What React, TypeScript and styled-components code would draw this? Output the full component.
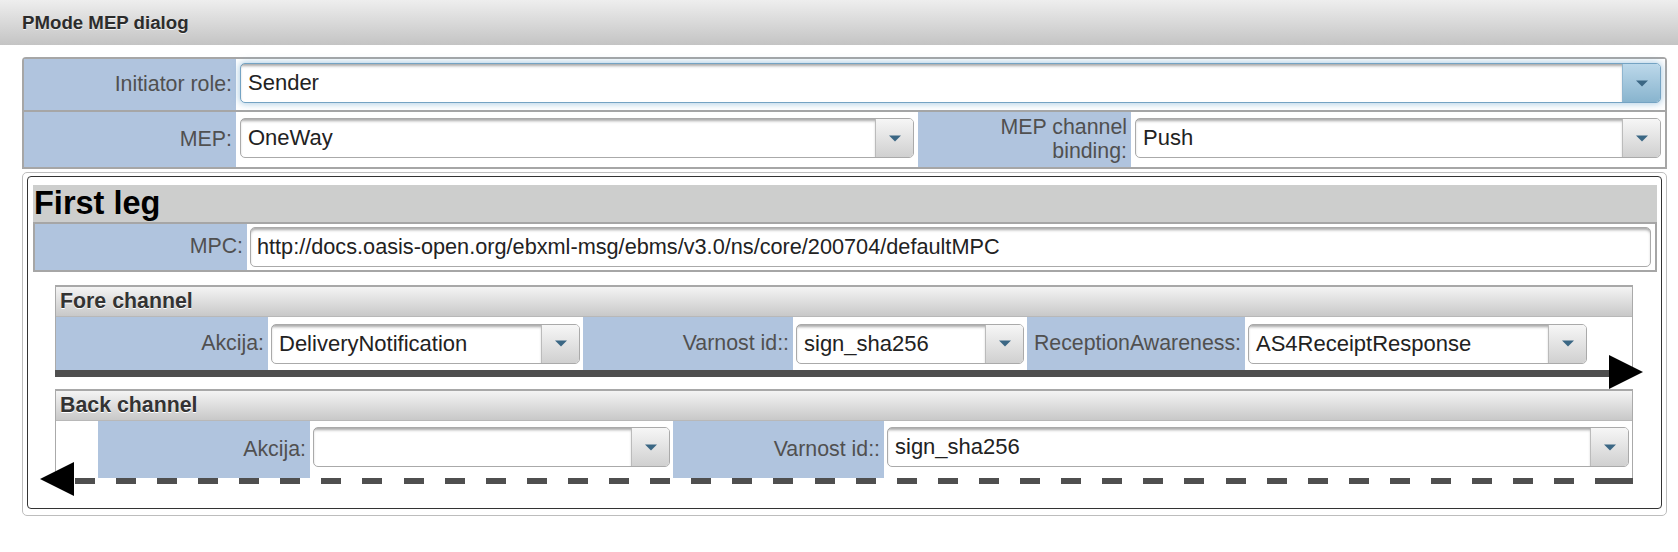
import React from 'react';
import styled, { createGlobalStyle } from 'styled-components';

const GlobalStyle = createGlobalStyle`
  html, body { margin: 0; padding: 0; background: #ffffff; }
  body {
    font-family: "Liberation Sans", Arial, Helvetica, sans-serif;
    font-size: 21.33px;
    color: #222222;
  }
  *, *::before, *::after { box-sizing: border-box; }
`;

const TitleBar = styled.header`
  height: 45px;
  display: flex;
  align-items: center;
  padding-left: 22px;
  background: linear-gradient(#eeeeee, #c4c4c4);
`;

const Title = styled.h1`
  margin: 0;
  font-size: 18.67px;
  font-weight: bold;
  color: #2c2c2c;
  text-shadow: 0 1px 0 rgba(255, 255, 255, 0.7);
`;

const Content = styled.main`
  padding: 12px 11px 0 22px;
`;

const FormGrid = styled.div`
  display: grid;
  grid-template-columns: 212px 682px 213px 1fr;
  row-gap: 2px;
  background: #a6a6a6;
  border: 2px solid #a6a6a6;
  border-radius: 4px 4px 0 0;
`;

const Label = styled.div<{ $w?: number }>`
  ${(p) => (p.$w ? `flex: 0 0 ${p.$w}px; width: ${p.$w}px;` : '')}
  background: #b0c4de;
  color: #505050;
  display: flex;
  align-items: center;
  justify-content: flex-end;
  text-align: right;
  padding: 4px 4px 4px 0;
  line-height: 23.5px;
  white-space: nowrap;
`;

const Field = styled.div<{ $w?: number; $top?: number }>`
  ${(p) => (p.$w ? `flex: 0 0 ${p.$w}px; width: ${p.$w}px;` : 'flex: 1;')}
  background: #ffffff;
  display: flex;
  align-items: ${(p) => (p.$top !== undefined ? 'flex-start' : 'center')};
  padding: ${(p) => p.$top ?? 0}px 3px 0 3px;
`;

const FormField = styled.div<{ $span?: number }>`
  grid-column: span ${(p) => p.$span ?? 1};
  background: #ffffff;
  display: flex;
  align-items: center;
  padding: 4px 4px 7px 4px;
`;

const Spacer = styled.div<{ $w: number }>`
  flex: 0 0 ${(p) => p.$w}px;
  background: #ffffff;
`;

const SelectBox = styled.div<{ $focus?: boolean }>`
  flex: 1;
  min-width: 0;
  height: 40px;
  display: flex;
  border: 1px solid ${(p) => (p.$focus ? '#74a3c3' : '#aaaaaa')};
  border-radius: 5px;
  background: #ffffff;
  overflow: hidden;
  box-shadow: ${(p) => (p.$focus ? '0 0 7px 1px rgba(110, 165, 205, 0.55)' : 'none')};
`;

const SelectValue = styled.div`
  flex: 1;
  min-width: 0;
  display: flex;
  align-items: center;
  padding: 0 7px;
  font-size: 22px;
  color: #222222;
  white-space: nowrap;
  overflow: hidden;
  box-shadow: inset 0 3px 3px -1px rgba(0, 0, 0, 0.35);
`;

const DropButton = styled.div<{ $focus?: boolean }>`
  flex: 0 0 38px;
  display: flex;
  align-items: center;
  justify-content: center;
  border-left: 1px solid ${(p) => (p.$focus ? '#8fb5cf' : '#bbbbbb')};
  background: ${(p) =>
    p.$focus ? 'linear-gradient(#bcd8ea, #88b4ce)' : 'linear-gradient(#f6f6f6, #d0d0d0)'};
`;

const TextInput = styled.div`
  flex: 1;
  height: 40px;
  display: flex;
  align-items: center;
  padding: 0 6px;
  border: 1px solid #aaaaaa;
  border-radius: 5px;
  background: #ffffff;
  font-size: 21.7px;
  color: #222222;
  white-space: nowrap;
  box-shadow: inset 0 3px 3px -1px rgba(0, 0, 0, 0.35);
`;

const LegOuter = styled.div`
  margin-top: 3px;
  border: 1px solid #bdbdbd;
  border-radius: 5px;
  padding: 3px 4px 6px 4px;
`;

const LegInner = styled.div`
  border: 1px solid #333333;
  border-radius: 4px;
  padding: 8px 4px 24px 5px;
`;

const LegHeader = styled.h2`
  margin: 0;
  height: 37px;
  background: #cdcecd;
  color: #000000;
  font-size: 32.5px;
  font-weight: bold;
  line-height: 37px;
  padding-left: 1px;
`;

const LegRow = styled.div`
  display: flex;
  height: 50px;
  border: 2px solid #a6a6a6;
`;

const ChannelBlock = styled.div<{ $mt: number }>`
  margin: ${(p) => p.$mt}px 24px 0 22px;
`;

const ChannelBox = styled.div`
  border: 1px solid #aaaaaa;
  border-top: 2px solid #a8a8a8;
  border-bottom: none;
`;

const ChannelHeader = styled.h3`
  margin: 0;
  height: 30px;
  line-height: 29px;
  padding-left: 4px;
  font-size: 21.33px;
  font-weight: bold;
  color: #333333;
  text-shadow: 0 1px 0 #ffffff;
  background: linear-gradient(#f4f4f4, #c8c8c8);
  border-bottom: 1px solid #b8b8b8;
`;

const ChannelRow = styled.div<{ $h: number }>`
  display: flex;
  height: ${(p) => p.$h}px;
  background: #ffffff;
`;

const FlowBar = styled.div`
  position: relative;
  height: 7px;
  background: #4f4f4f;
`;

const FlowDash = styled.div`
  position: relative;
  height: 6px;
  background:
    linear-gradient(to right, transparent calc(100% - 38px), #4f4f4f calc(100% - 38px)),
    repeating-linear-gradient(
      to right,
      transparent 0 19.8px,
      #4f4f4f 19.8px 39.8px,
      transparent 39.8px 41.1px
    );
`;

const ArrowHead = styled.svg<{ $side: 'left' | 'right'; $top: number; $offset: number }>`
  position: absolute;
  top: ${(p) => p.$top}px;
  ${(p) => p.$side}: ${(p) => p.$offset}px;
  width: 34px;
  height: 34px;
  display: block;
`;

function Caret() {
  return (
    <svg width="12" height="7" viewBox="0 0 12 7" aria-hidden="true">
      <path d="M0 0.5 H12 L6 6.5 Z" fill="#3b6784" />
    </svg>
  );
}

function Select({ value, focus }: { value: string; focus?: boolean }) {
  return (
    <SelectBox $focus={focus}>
      <SelectValue>{value}</SelectValue>
      <DropButton $focus={focus}>
        <Caret />
      </DropButton>
    </SelectBox>
  );
}

export default function App() {
  return (
    <>
      <GlobalStyle />
      <TitleBar>
        <Title>PMode MEP dialog</Title>
      </TitleBar>
      <Content>
        <FormGrid>
          <Label>Initiator role:</Label>
          <FormField $span={3}>
            <Select value="Sender" focus />
          </FormField>
          <Label>MEP:</Label>
          <FormField>
            <Select value="OneWay" />
          </FormField>
          <Label>
            MEP channel
            <br />
            binding:
          </Label>
          <FormField>
            <Select value="Push" />
          </FormField>
        </FormGrid>

        <LegOuter>
          <LegInner>
            <LegHeader>First leg</LegHeader>
            <LegRow>
              <Label $w={212}>MPC:</Label>
              <Field style={{ padding: '0 4px 0 3px' }}>
                <TextInput>http://docs.oasis-open.org/ebxml-msg/ebms/v3.0/ns/core/200704/defaultMPC</TextInput>
              </Field>
            </LegRow>

            <ChannelBlock $mt={13}>
              <ChannelBox>
                <ChannelHeader>Fore channel</ChannelHeader>
                <ChannelRow $h={53}>
                  <Label $w={212}>Akcija:</Label>
                  <Field $w={315}>
                    <Select value="DeliveryNotification" />
                  </Field>
                  <Label $w={210}>Varnost id::</Label>
                  <Field $w={234}>
                    <Select value="sign_sha256" />
                  </Field>
                  <Label $w={218}>ReceptionAwareness:</Label>
                  <Field $w={345}>
                    <Select value="AS4ReceiptResponse" />
                  </Field>
                  <Field />
                </ChannelRow>
              </ChannelBox>
              <FlowBar>
                <ArrowHead $side="right" $top={-15} $offset={-10} viewBox="0 0 34 34">
                  <polygon points="0,0 34,17 0,34" fill="#000000" />
                </ArrowHead>
              </FlowBar>
            </ChannelBlock>

            <ChannelBlock $mt={12}>
              <ChannelBox>
                <ChannelHeader>Back channel</ChannelHeader>
                <ChannelRow $h={57}>
                  <Spacer $w={42} />
                  <Label $w={212}>Akcija:</Label>
                  <Field $w={363} $top={6}>
                    <Select value="" />
                  </Field>
                  <Label $w={211}>Varnost id::</Label>
                  <Field $top={6}>
                    <Select value="sign_sha256" />
                  </Field>
                </ChannelRow>
              </ChannelBox>
              <FlowDash>
                <ArrowHead $side="left" $top={-16} $offset={-15} viewBox="0 0 34 34">
                  <polygon points="34,0 0,17 34,34" fill="#000000" />
                </ArrowHead>
              </FlowDash>
            </ChannelBlock>
          </LegInner>
        </LegOuter>
      </Content>
    </>
  );
}
